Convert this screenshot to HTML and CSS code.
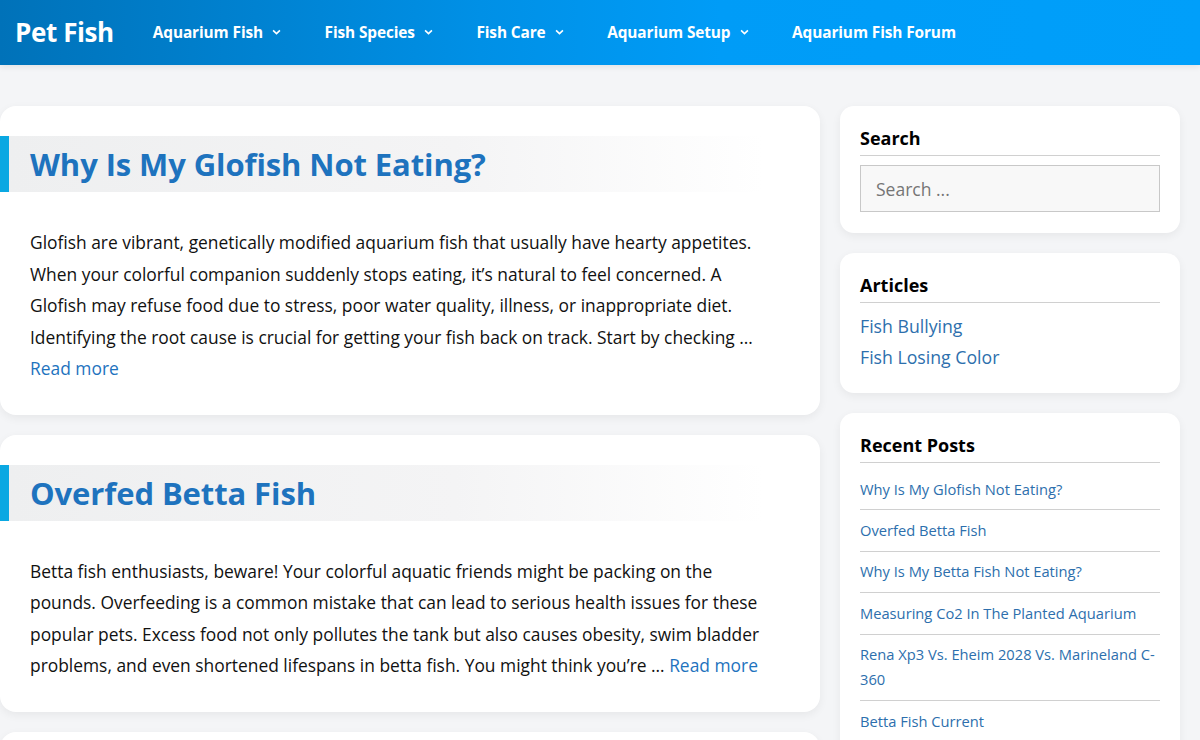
FILE: index.html
```html
<!DOCTYPE html>
<html lang="en">
<head>
<meta charset="utf-8">
<title>Pet Fish</title>
<link rel="stylesheet" href="styles.css">
</head>
<body>
<header class="site-header">
  <a class="logo" href="#">Pet Fish</a>
  <nav class="main-nav">
    <a class="nav-item" href="#">Aquarium Fish <svg class="chev" viewBox="0 0 10 6"><path d="M1.2 1.2l3.8 3.6 3.8-3.6" /></svg></a>
    <a class="nav-item" href="#">Fish Species <svg class="chev" viewBox="0 0 10 6"><path d="M1.2 1.2l3.8 3.6 3.8-3.6" /></svg></a>
    <a class="nav-item" href="#">Fish Care <svg class="chev" viewBox="0 0 10 6"><path d="M1.2 1.2l3.8 3.6 3.8-3.6" /></svg></a>
    <a class="nav-item" href="#">Aquarium Setup <svg class="chev" viewBox="0 0 10 6"><path d="M1.2 1.2l3.8 3.6 3.8-3.6" /></svg></a>
    <a class="nav-item" href="#">Aquarium Fish Forum</a>
  </nav>
</header>
<div class="page">
  <main class="content">
    <article class="post">
      <h2 class="post-title"><a href="#">Why Is My Glofish Not Eating?</a></h2>
      <p class="excerpt">Glofish are vibrant, genetically modified aquarium fish that usually have hearty appetites.<br>When your colorful companion suddenly stops eating, it’s natural to feel concerned. A<br>Glofish may refuse food due to stress, poor water quality, illness, or inappropriate diet.<br>Identifying the root cause is crucial for getting your fish back on track. Start by checking …<br><a class="more" href="#">Read more</a></p>
    </article>
    <article class="post">
      <h2 class="post-title"><a href="#">Overfed Betta Fish</a></h2>
      <p class="excerpt">Betta fish enthusiasts, beware! Your colorful aquatic friends might be packing on the<br>pounds. Overfeeding is a common mistake that can lead to serious health issues for these<br>popular pets. Excess food not only pollutes the tank but also causes obesity, swim bladder<br>problems, and even shortened lifespans in betta fish. You might think you’re … <a class="more" href="#">Read more</a></p>
    </article>
    <article class="post"></article>
  </main>
  <aside class="sidebar">
    <section class="widget">
      <h3 class="widget-title">Search</h3>
      <input class="search" type="search" placeholder="Search ...">
    </section>
    <section class="widget">
      <h3 class="widget-title">Articles</h3>
      <ul class="links">
        <li><a href="#">Fish Bullying</a></li>
        <li><a href="#">Fish Losing Color</a></li>
      </ul>
    </section>
    <section class="widget">
      <h3 class="widget-title">Recent Posts</h3>
      <ul class="recent">
        <li><a href="#">Why Is My Glofish Not Eating?</a></li>
        <li><a href="#">Overfed Betta Fish</a></li>
        <li><a href="#">Why Is My Betta Fish Not Eating?</a></li>
        <li><a href="#">Measuring Co2 In The Planted Aquarium</a></li>
        <li><a href="#">Rena Xp3 Vs. Eheim 2028 Vs. Marineland C-360</a></li>
        <li><a href="#">Betta Fish Current</a></li>
      </ul>
    </section>
  </aside>
</div>
</body>
</html>
```
FILE: styles.css
```css
* { box-sizing: border-box; }
html, body { margin: 0; padding: 0; }
body {
  background: #f4f5f7;
  font-family: "Open Sans", "Noto Sans", sans-serif;
  color: #111;
}
a { text-decoration: none; }
.site-header {
  height: 65px;
  background: linear-gradient(90deg, #0072b9 0%, #0090e6 40%, #009cf7 60%, #009ffa 100%);
  display: flex;
  align-items: center;
  padding-left: 15px;
  padding-bottom: 1px;
  box-shadow: 0 2px 6px rgba(0,0,0,0.08);
}
.logo {
  color: #fff;
  font-weight: 700;
  font-size: 26px;
  letter-spacing: -0.4px;
  margin-right: 39px;
}
.main-nav { display: flex; }
.nav-item {
  color: #fff;
  font-weight: 700;
  font-size: 15.4px;
  letter-spacing: -0.1px;
  display: flex;
  align-items: center;
  margin-right: 43.5px;
}
.chev {
  width: 9px;
  height: 6px;
  margin-left: 9px;
  fill: none;
  stroke: #fff;
  stroke-width: 1.8;
}
.page {
  display: flex;
  gap: 20px;
  padding: 41px 20px 0 0;
}
.content { width: 820px; display: flex; flex-direction: column; gap: 20px; }
.post {
  background: #fff;
  border-radius: 16px;
  box-shadow: 0 3px 10px rgba(0,0,0,0.06);
  padding: 30px 0 30px 0;
  min-height: 60px;
}
.post-title {
  margin: 0 0 35px 0;
  height: 56px;
  display: flex;
  align-items: center;
  padding-left: 30px;
  border-left: 9px solid #0aa8e2;
  background: linear-gradient(90deg, #eeeff0 0%, #f4f4f5 55%, #ffffff 93%);
  font-size: 31px;
  font-weight: 700;
}
.post-title a { color: #1e73be; margin-left: -9px; letter-spacing: -0.1px; }
.excerpt {
  margin: 0;
  padding: 0 10px 0 30px;
  font-size: 17.4px;
  line-height: 31.5px;
  color: #111;
}
.more { color: #1e73be; }
.sidebar { width: 340px; display: flex; flex-direction: column; gap: 20px; }
.widget {
  background: #fff;
  border-radius: 14px;
  box-shadow: 0 3px 10px rgba(0,0,0,0.06);
  padding: 20px 20px 21px 20px;
}
.widget-title {
  margin: 0;
  font-size: 18px;
  font-weight: 700;
  color: #000;
  padding-bottom: 5px;
  border-bottom: 1px solid #d0d0d0;
}
.search {
  display: block;
  width: 100%;
  height: 47px;
  margin-top: 9px;
  border: 1px solid #c8c8c8;
  background: #f8f8f8;
  font-family: inherit;
  font-size: 17.5px;
  padding: 0 15px;
  color: #333;
  outline: none;
}
.search::placeholder { color: #757575; }
.links, .recent { list-style: none; margin: 0; padding: 0; }
.links { margin-top: 8px; margin-bottom: -1px; }
.links li { font-size: 17.7px; line-height: 31px; }
.links a, .recent a { color: #2d6fad; }
.recent { margin-top: 6px; }
.recent li {
  font-size: 14.7px;
  line-height: 25px;
  padding: 7.7px 0 7.7px 0;
  border-bottom: 1px solid #d0d0d0;
}
```
